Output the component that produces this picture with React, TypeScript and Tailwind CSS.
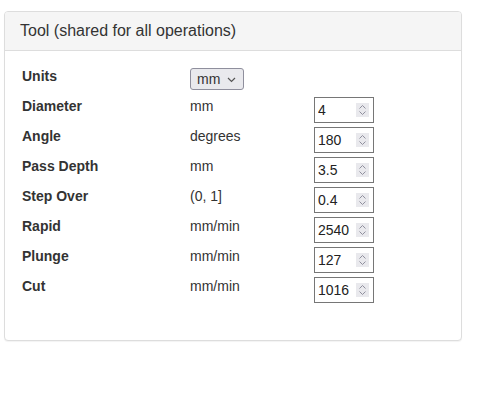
import { useState } from "react";

const rows = [
    { name: "Diameter", unit: "mm", value: "4" },
    { name: "Angle", unit: "degrees", value: "180" },
    { name: "Pass Depth", unit: "mm", value: "3.5" },
    { name: "Step Over", unit: "(0, 1]", value: "0.4" },
    { name: "Rapid", unit: "mm/min", value: "2540" },
    { name: "Plunge", unit: "mm/min", value: "127" },
    { name: "Cut", unit: "mm/min", value: "1016" },
];

function Spinner() {
    return (
        <span className="absolute right-[5px] top-[6px] w-[13px] h-[14px] bg-[#e9e9ed] flex items-center justify-center pointer-events-none">
            <svg width="9" height="12" viewBox="0 0 9 12" fill="none" stroke="#8f8f9d" strokeWidth="1">
                <path d="M1.5 4.5 L4.5 1.5 L7.5 4.5" />
                <path d="M1.5 7.5 L4.5 10.5 L7.5 7.5" />
            </svg>
        </span>
    )
}

export default function App() {
    const [units, setUnits] = useState("mm")

    return (
        <div className="w-[482px] h-[397px] bg-white pt-[11px] pl-[4px] font-['Liberation_Sans',Arial,sans-serif] text-[14px] text-[#333]">
            <div className="w-[458px] h-[330px] border border-[#ddd] rounded-[4px] shadow-[0_1px_1px_rgba(0,0,0,0.05)] bg-white">
                <div className="bg-[#f5f5f5] border-b border-[#ddd] rounded-t-[3px] px-[15px] py-[10px] h-[39px] text-[16px] leading-[18px]">
                    Tool (shared for all operations)
                </div>
                <div className="pt-[17px] pl-[17px]">
                    <div className="flex h-[27px]">
                        <div className="w-[168px] font-bold leading-[17px]">Units</div>
                        <div className="relative w-[54px] h-[22px]">
                            <select
                                value={units}
                                onChange={(e) => setUnits(e.target.value)}
                                className="appearance-none w-[54px] h-[22px] border border-[#8f8f9d] rounded-[3px] bg-[#e9e9ed] text-[14px] text-[#333] pl-[6px]"
                            >
                                <option value="mm">mm</option>
                                <option value="inch">inch</option>
                            </select>
                            <svg className="absolute right-[8px] top-[9px] pointer-events-none" width="9" height="6" viewBox="0 0 9 6" fill="none" stroke="#555" strokeWidth="1.2">
                                <path d="M1 1 L4.5 4.5 L8 1" />
                            </svg>
                        </div>
                    </div>
                    {rows.map((row) => (
                        <div key={row.name} className="flex h-[30px]">
                            <div className="w-[168px] font-bold leading-[20px] pt-[1px]">{row.name}</div>
                            <div className="w-[124px] leading-[20px] pt-[1px]">{row.unit}</div>
                            <div className="pt-[2px]">
                                <div className="relative w-[60px] h-[26px]">
                                    <input
                                        type="number"
                                        defaultValue={row.value}
                                        className="w-[60px] h-[26px] border border-[#767676] pl-[3px] pr-[18px] text-[#222] bg-white [appearance:textfield] [&::-webkit-inner-spin-button]:appearance-none"
                                    />
                                    <Spinner />
                                </div>
                            </div>
                        </div>
                    ))}
                </div>
            </div>
        </div>
    )
}
